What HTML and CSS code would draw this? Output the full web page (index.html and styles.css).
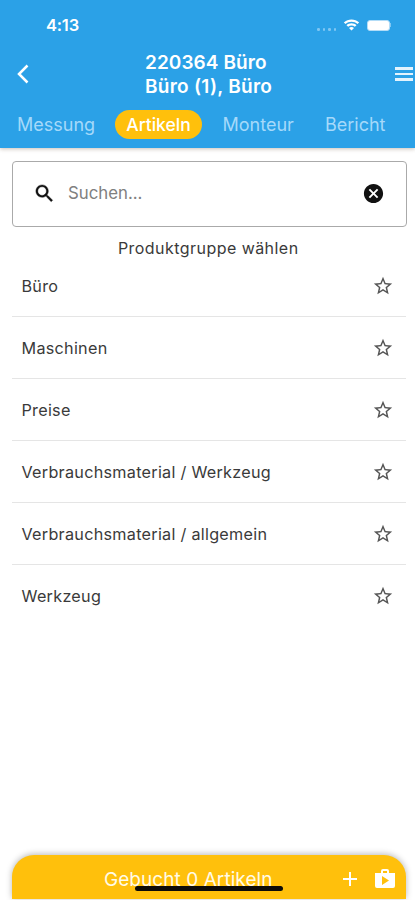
FILE: index.html
```html
<!DOCTYPE html>
<html lang="de">
<head>
<meta charset="utf-8">
<title>Artikeln</title>
<link rel="stylesheet" href="styles.css">
</head>
<body>
<svg class="defs" aria-hidden="true">
  <symbol id="star" viewBox="0 0 24 24"><path d="M22 9.24l-7.19-.62L12 2 9.19 8.63 2 9.24l5.46 4.73L5.82 21 12 17.27 18.18 21l-1.63-7.03L22 9.24zM12 15.4l-3.76 2.27 1-4.28-3.32-2.88 4.38-.38L12 6.1l1.71 4.04 4.38.38-3.32 2.88 1 4.28L12 15.4z"/></symbol>
</svg>
<div class="screen">
  <header class="header">
    <div class="status">
      <span class="time">4:13</span>
      <span class="dots"><i></i><i></i><i></i><i></i></span>
      <svg class="wifi" viewBox="0 0 17 12"><path d="M8.500 2.800c2.300 0 4.300.8 5.900 2.300L16.200 3.500C14.100 1.500 11.300.4 8.500.4S2.900 1.500.8 3.500L2.600 5.100C4.200 3.600 6.200 2.800 8.500 2.800zM8.500 6.600c1.300 0 2.400.4 3.300 1.200l1.700-1.600C12.100 5 10.400 4.300 8.500 4.300S4.900 5 3.500 6.200l1.700 1.600c.9-.8 2-1.200 3.300-1.200zM11 9C10.300 8.400 9.400 8 8.500 8S6.700 8.400 6 9l2.500 2.600z"/></svg>
      <span class="battery"></span><span class="nub"></span>
    </div>
    <div class="titlebar">
      <svg class="back" viewBox="0 0 12 20"><path d="M10.500 1.500L2 10l8.500 8.500"/></svg>
      <h1 class="title">220364 Büro<br><span class="subtitle">Büro (1), Büro</span></h1>
      <span class="menu"><i></i><i></i><i></i></span>
    </div>
    <nav class="tabs">
      <a class="tab messung">Messung</a>
      <a class="tab active">Artikeln</a>
      <a class="tab monteur">Monteur</a>
      <a class="tab bericht">Bericht</a>
    </nav>
  </header>
  <main class="content">
    <div class="search">
      <svg class="magnifier" viewBox="0 0 24 24"><path d="M15.500 14h-.79l-.28-.27C15.410 12.590 16 11.110 16 9.500 16 5.910 13.090 3 9.500 3S3 5.910 3 9.500 5.910 16 9.500 16c1.610 0 3.090-.59 4.230-1.570l.27.28v.79l5 4.990L20.490 19l-4.990-5zm-6 0C7.010 14 5 11.990 5 9.500S7.010 5 9.500 5 14 7.010 14 9.500 11.990 14 9.500 14z"/></svg>
      <span class="placeholder">Suchen...</span>
      <svg class="clear" viewBox="0 0 24 24"><path d="M12 2C6.470 2 2 6.470 2 12s4.470 10 10 10 10-4.470 10-10S17.530 2 12 2zm5 13.590L15.590 17 12 13.410 8.410 17 7 15.590 10.590 12 7 8.410 8.410 7 12 10.590 15.590 7 17 8.410 13.410 12 17 15.590z"/></svg>
    </div>
    <h2 class="heading">Produktgruppe wählen</h2>
    <ul class="list">
      <li><span>Büro</span><svg><use href="#star"/></svg></li>
      <li><span>Maschinen</span><svg><use href="#star"/></svg></li>
      <li><span>Preise</span><svg><use href="#star"/></svg></li>
      <li><span>Verbrauchsmaterial / Werkzeug</span><svg><use href="#star"/></svg></li>
      <li><span>Verbrauchsmaterial / allgemein</span><svg><use href="#star"/></svg></li>
      <li><span>Werkzeug</span><svg><use href="#star"/></svg></li>
    </ul>
  </main>
  <footer class="booking">
    <span class="booked">Gebucht 0 Artikeln</span>
    <svg class="plus" viewBox="0 0 14 14"><path d="M7 0v14M0 7h14"/></svg>
    <svg class="bag" viewBox="0 0 20 20"><path fill-rule="evenodd" d="M6 4V2q0-2 2-2h4q2 0 2 2v2h6v13q0 2-2 2H2q-2 0-2-2V4zm2 0h4V2H8zM7 7v9l7-4.500z"/></svg>
    <span class="home"></span>
  </footer>
</div>
</body>
</html>
```
FILE: styles.css
```css
* { box-sizing: border-box; }
body { margin: 0; background: #fff; font-family: Inter, "Liberation Sans", sans-serif; color: #3a3a3a; }
.defs { position: absolute; width: 0; height: 0; }
svg { display: block; flex: none; }
.screen { height: 900px; display: flex; flex-direction: column; overflow: hidden; }

.header { height: 148px; background: #2ba1e7; color: #fff; box-shadow: 0 1px 4px rgba(80, 50, 20, .3); flex: none; }
.status { height: 50px; display: flex; align-items: center; padding: 0 24px 0 46px; }
.time { font-size: 16.500px; font-weight: 600; letter-spacing: -.2px; margin-right: auto; }
.dots { display: flex; gap: 3px; margin: 9px 7px 0 0; }
.dots i { width: 2.500px; height: 2.500px; border-radius: 50%; background: #80c7f3; }
.wifi { width: 17px; height: 12px; fill: #fff; margin: -1px 7px 0 0; }
.battery { width: 23px; height: 11px; border-radius: 3px; background: #fff; border: 1px solid #b2dcf7; }
.nub { width: 1px; height: 4px; background: #80c7f3; }
.titlebar { height: 48px; display: flex; align-items: center; padding: 0 2px 0 17px; }
.back { width: 12px; height: 20px; fill: none; stroke: #fff; stroke-width: 2.500; }
.title { margin: 2px auto 0 116px; font-size: 19px; line-height: 24px; font-weight: 600; letter-spacing: .08px; white-space: nowrap; }
.subtitle { letter-spacing: .27px; }
.menu { display: flex; flex-direction: column; gap: 3px; }
.menu i { width: 18px; height: 2.500px; background: #e3f3fd; }
.tabs { height: 30px; margin-top: 11px; display: flex; align-items: center; padding-left: 17px; font-size: 18px; }
.tab { color: #a5d9fa; white-space: nowrap; }
.messung { width: 98px; }
.active { width: 87px; height: 29px; border-radius: 15px; line-height: 29px; margin-top: 1px; text-align: center; background: #ffc00c; color: #fff; font-weight: 500; font-size: 17.500px; }
.monteur { width: 102.500px; margin-left: 20.500px; }

.content { flex: 1; padding: 13px 9px 0 11.500px; }
.search { height: 66px; width: 395px; border: 1px solid #aaa; border-radius: 4px; display: flex; align-items: center; padding: 0 21px 2px 20px; }
.magnifier { width: 23px; height: 23px; fill: #111; stroke: #111; stroke-width: .4; }
.placeholder { margin: 0 auto 0 12.500px; font-size: 16.800px; color: #808080; }
.clear { width: 23px; height: 23px; fill: #111; }
.heading { margin: 0; height: 28px; padding-top: 10px; font-size: 16px; line-height: 22px; font-weight: 400; letter-spacing: .45px; text-align: center; padding-right: 1px; }
.list { margin: 0 0 0 .5px; padding: 0; list-style: none; width: 394px; }
.list li { height: 62px; display: flex; align-items: center; justify-content: space-between; padding: 1px 12px 0 9.500px; border-bottom: 1px solid #e5e5e5; font-size: 16.200px; letter-spacing: .27px; }
.list li:last-child { border-bottom-color: transparent; }
.list svg { width: 22px; height: 22px; fill: #555; }

.booking { position: relative; height: 44px; margin: 0 9px 1px 12px; border-radius: 22px 22px 0 0; background: #ffc00c; color: #fff; display: flex; align-items: center; padding: 4px 11px 0 92px; box-shadow: 0 -1px 6px rgba(0, 0, 0, .28); }
.booked { font-size: 19px; letter-spacing: .06px; margin-right: auto; white-space: nowrap; color: #fffbe8; }
.plus { width: 14px; height: 14px; stroke: #fff; stroke-width: 2; margin-right: 18px; }
.bag { width: 20px; height: 20px; fill: #fff; }
.home { position: absolute; left: 123px; top: 31px; width: 148px; height: 5px; border-radius: 3px; background: #0c0b08; }
```
